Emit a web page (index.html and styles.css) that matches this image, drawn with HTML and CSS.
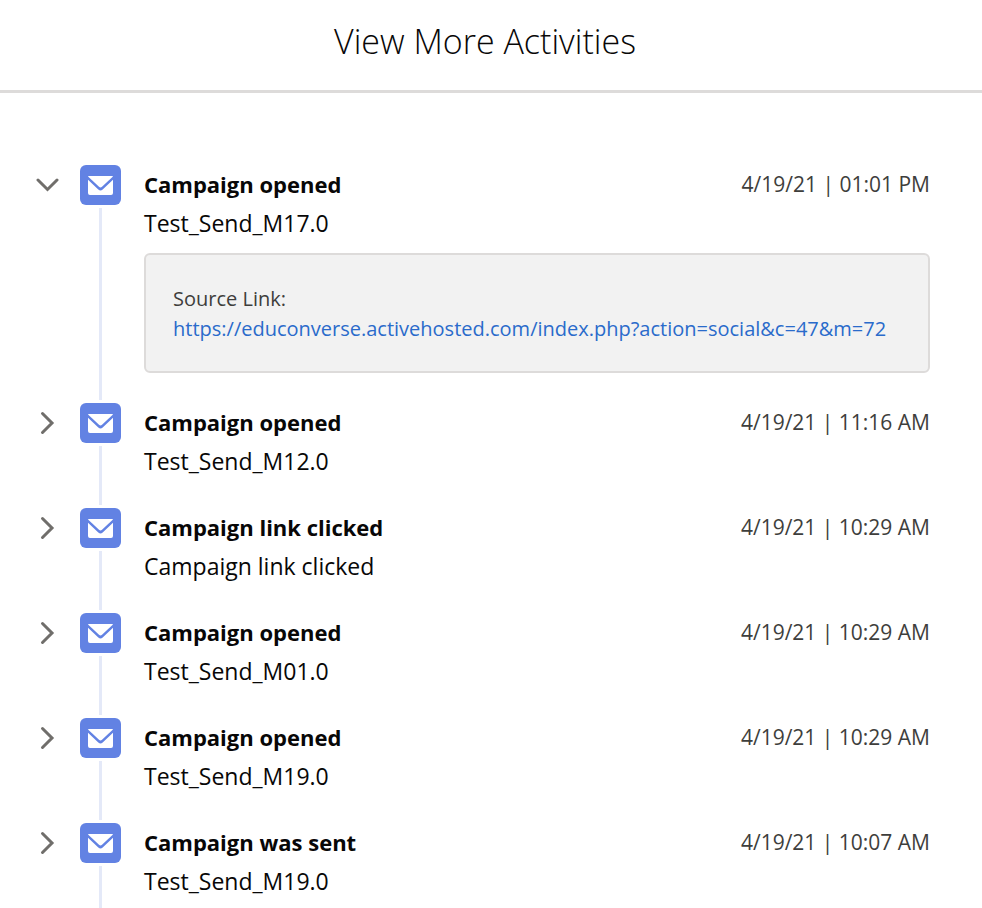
FILE: index.html
```html
<!DOCTYPE html>
<html lang="en">
<head>
<meta charset="utf-8">
<meta name="viewport" content="width=device-width, initial-scale=1">
<title>View More Activities</title>
<link rel="stylesheet" href="styles.css">
</head>
<body>
<svg class="sprite" aria-hidden="true">
  <symbol id="chevron-right" viewBox="0 0 24 24"><path d="M6.500 2.500L16 12L6.500 21.500" fill="none" stroke="currentColor" stroke-width="3" stroke-linecap="round" stroke-linejoin="miter"/></symbol>
  <symbol id="chevron-down" viewBox="0 0 24 24"><path d="M2 7L11.500 16.500L21 7" fill="none" stroke="currentColor" stroke-width="3" stroke-linecap="round" stroke-linejoin="miter"/></symbol>
  <symbol id="mail" viewBox="0 0 41 40"><path d="M8.500 11H32.500Q33 11 32.700 11.800L22 21.800Q20.500 23 19 21.800L8.300 11.800Q8 11 8.500 11Z" fill="currentColor"/><path d="M8 14.800L18.300 24.500Q20.500 26.300 22.700 24.500L33 14.800V28Q33 30 31 30H10Q8 30 8 28Z" fill="currentColor"/></symbol>
</svg>
<header class="header">
  <h1 class="title">View More Activities</h1>
</header>
<main>
  <ul class="timeline">
    <li class="item">
      <button class="toggle" type="button" aria-label="Collapse" aria-expanded="true"><svg><use href="#chevron-down"/></svg></button>
      <div class="rail"><span class="icon"><svg><use href="#mail"/></svg></span></div>
      <div class="content">
        <div class="heading"><h2 class="name">Campaign opened</h2><time class="date">4/19/21 | 01:01 PM</time></div>
        <p class="detail">Test_Send_M17.0</p>
        <div class="source">
          <p class="label">Source Link:</p>
          <a class="link" href="https://educonverse.activehosted.com/index.php?action=social&amp;c=47&amp;m=72">https://educonverse.activehosted.com/index.php?action=social&amp;c=47&amp;m=72</a>
        </div>
      </div>
    </li>
    <li class="item">
      <button class="toggle" type="button" aria-label="Expand" aria-expanded="false"><svg><use href="#chevron-right"/></svg></button>
      <div class="rail"><span class="icon"><svg><use href="#mail"/></svg></span></div>
      <div class="content">
        <div class="heading"><h2 class="name">Campaign opened</h2><time class="date">4/19/21 | 11:16 AM</time></div>
        <p class="detail">Test_Send_M12.0</p>
      </div>
    </li>
    <li class="item">
      <button class="toggle" type="button" aria-label="Expand" aria-expanded="false"><svg><use href="#chevron-right"/></svg></button>
      <div class="rail"><span class="icon"><svg><use href="#mail"/></svg></span></div>
      <div class="content">
        <div class="heading"><h2 class="name">Campaign link clicked</h2><time class="date">4/19/21 | 10:29 AM</time></div>
        <p class="detail">Campaign link clicked</p>
      </div>
    </li>
    <li class="item">
      <button class="toggle" type="button" aria-label="Expand" aria-expanded="false"><svg><use href="#chevron-right"/></svg></button>
      <div class="rail"><span class="icon"><svg><use href="#mail"/></svg></span></div>
      <div class="content">
        <div class="heading"><h2 class="name">Campaign opened</h2><time class="date">4/19/21 | 10:29 AM</time></div>
        <p class="detail">Test_Send_M01.0</p>
      </div>
    </li>
    <li class="item">
      <button class="toggle" type="button" aria-label="Expand" aria-expanded="false"><svg><use href="#chevron-right"/></svg></button>
      <div class="rail"><span class="icon"><svg><use href="#mail"/></svg></span></div>
      <div class="content">
        <div class="heading"><h2 class="name">Campaign opened</h2><time class="date">4/19/21 | 10:29 AM</time></div>
        <p class="detail">Test_Send_M19.0</p>
      </div>
    </li>
    <li class="item">
      <button class="toggle" type="button" aria-label="Expand" aria-expanded="false"><svg><use href="#chevron-right"/></svg></button>
      <div class="rail"><span class="icon"><svg><use href="#mail"/></svg></span></div>
      <div class="content">
        <div class="heading"><h2 class="name">Campaign was sent</h2><time class="date">4/19/21 | 10:07 AM</time></div>
        <p class="detail">Test_Send_M19.0</p>
      </div>
    </li>
  </ul>
</main>
</body>
</html>
```
FILE: styles.css
```css
* {
  box-sizing: border-box;
}

html {
  scrollbar-width: none;
}

body {
  margin: 0;
  background: #fff;
  color: #080707;
  font-family: "Open Sans", "Noto Sans", sans-serif;
  font-size: 22px;
}

h1, h2, p, ul {
  margin: 0;
  padding: 0;
}

.sprite {
  display: none;
}

.header {
  padding: 16px 24px 24px 12px;
  border-bottom: 3px solid #dddbda;
  text-align: center;
}

.title {
  font-size: 34px;
  font-weight: 300;
  line-height: 50px;
}

.timeline {
  padding: 72px 52px 0 36px;
  list-style: none;
}

.item {
  display: grid;
  grid-template-columns: 24px 41px minmax(0, 1fr);
  column-gap: 20px;
}

.toggle {
  width: 24px;
  height: 40px;
  padding: 0;
  border: 0;
  background: none;
  color: #706e6b;
}

.toggle svg {
  display: block;
  width: 24px;
  height: 24px;
}

.rail {
  display: flex;
  flex-direction: column;
  align-items: center;
}

.rail::after {
  content: "";
  flex: 1;
  width: 3px;
  margin: 3px 0;
  background: #e4e9f8;
}

.icon {
  width: 41px;
  height: 40px;
  border-radius: 6px;
  background: #6282e3;
  color: #fff;
}

.icon svg {
  display: block;
  width: 41px;
  height: 40px;
}

.content {
  padding: 0 0 27px 3px;
}

.heading {
  display: flex;
  justify-content: space-between;
  gap: 16px;
}

.name {
  font-size: 22px;
  font-weight: 700;
  line-height: 38px;
}

.date {
  color: #3e3e3c;
  font-size: 21px;
  line-height: 38px;
  white-space: nowrap;
}

.detail {
  font-size: 23px;
  line-height: 40px;
}

.source {
  margin: 10px 0 3px;
  padding: 29px 27px 27px;
  border: 2px solid #dddbda;
  border-radius: 6px;
  background: #f2f2f2;
  font-size: 20px;
  line-height: 30px;
}

.label {
  color: #3e3e3c;
}

.link {
  display: block;
  color: #2a6bcb;
  text-decoration: none;
}
```
